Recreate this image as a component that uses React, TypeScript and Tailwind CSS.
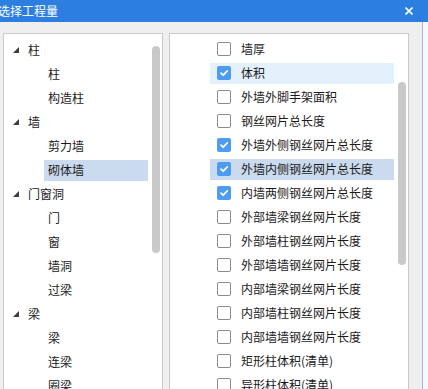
import React from 'react';

type TreeNode = { label: string; level: 1 | 2; selected?: boolean };

const treeNodes: TreeNode[] = [
  { label: '柱', level: 1 },
  { label: '柱', level: 2 },
  { label: '构造柱', level: 2 },
  { label: '墙', level: 1 },
  { label: '剪力墙', level: 2 },
  { label: '砌体墙', level: 2, selected: true },
  { label: '门窗洞', level: 1 },
  { label: '门', level: 2 },
  { label: '窗', level: 2 },
  { label: '墙洞', level: 2 },
  { label: '过梁', level: 2 },
  { label: '梁', level: 1 },
  { label: '梁', level: 2 },
  { label: '连梁', level: 2 },
  { label: '圈梁', level: 2 },
];

type Item = { label: string; checked?: boolean; state?: 'hover' | 'selected' };

const items: Item[] = [
  { label: '墙厚' },
  { label: '体积', checked: true, state: 'hover' },
  { label: '外墙外脚手架面积' },
  { label: '钢丝网片总长度' },
  { label: '外墙外侧钢丝网片总长度', checked: true },
  { label: '外墙内侧钢丝网片总长度', checked: true, state: 'selected' },
  { label: '内墙两侧钢丝网片总长度', checked: true },
  { label: '外部墙梁钢丝网片长度' },
  { label: '外部墙柱钢丝网片长度' },
  { label: '外部墙墙钢丝网片长度' },
  { label: '内部墙梁钢丝网片长度' },
  { label: '内部墙柱钢丝网片长度' },
  { label: '内部墙墙钢丝网片长度' },
  { label: '矩形柱体积(清单)' },
  { label: '异形柱体积(清单)' },
];

const Expander = () => (
  <svg width="6" height="6" viewBox="0 0 6 6" className="shrink-0">
    <path d="M6 0 L6 6 L0 6 Z" fill="#3c3c3c" />
  </svg>
);

const CheckBox: React.FC<{ checked?: boolean }> = ({ checked }) =>
  checked ? (
    <span className="flex h-[14px] w-[14px] shrink-0 items-center justify-center rounded-[2px] bg-[#4e9cf2]">
      <svg width="10" height="10" viewBox="0 0 10 10">
        <path d="M2 5.2 L4.2 7.2 L8.2 3" fill="none" stroke="#ffffff" strokeWidth="1.8" strokeLinecap="round" strokeLinejoin="round" />
      </svg>
    </span>
  ) : (
    <span className="h-[14px] w-[14px] shrink-0 rounded-[2px] border border-[#8a8a8a] bg-white" />
  );

export default function App() {
  return (
    <div
      className="relative h-[389px] w-[428px] overflow-hidden bg-[#f7f8fa] text-[12px] text-[#1a1a1a]"
      style={{ fontFamily: '"Noto Sans CJK SC", "Noto Sans", sans-serif' }}
    >
      {/* title bar */}
      <div className="flex h-[22px] items-center justify-between bg-[#2c7fe0] pr-[15px] text-white">
        <span className="-ml-[2px] text-[12px] leading-none">选择工程量</span>
        <svg width="8" height="8" viewBox="0 0 8 8">
          <path d="M0.5 0.5 L7.5 7.5 M7.5 0.5 L0.5 7.5" stroke="#ffffff" strokeWidth="1.6" />
        </svg>
      </div>

      <div className="flex h-[367px] w-[423px] gap-[6px] border-r border-[#a7b8cd] bg-[#efefef] pl-[3px] pt-[11px]">
        {/* tree panel */}
        <div className="flex h-[400px] w-[160px] border border-[#c9c9c9] bg-white">
          <div className="w-[148px] pt-[4px]">
            {treeNodes.map((n, i) => (
              <div key={i} className="flex h-[24px] items-center">
                {n.level === 1 ? (
                  <div className="flex items-center pl-[9px]">
                    <Expander />
                    <span className="ml-[9px]">{n.label}</span>
                  </div>
                ) : (
                  <div
                    className={`ml-[40px] flex h-[21px] w-[104px] items-center pl-[4px] ${n.selected ? 'bg-[#cbdbef]' : ''}`}
                  >
                    {n.label}
                  </div>
                )}
              </div>
            ))}
          </div>
          <div className="w-[8px]">
            <div className="mt-[12px] h-[207px] w-[8px] rounded-full bg-[#c9c9c9]" />
          </div>
        </div>

        {/* quantity panel */}
        <div className="flex h-[400px] w-[240px] border border-[#c9c9c9] bg-white">
          <div className="w-[228px] pt-[3px]">
            {items.map((it, i) => (
              <div key={i} className="flex h-[24px] items-center">
                <div
                  className={`ml-[40px] flex h-[21px] w-[184px] items-center gap-[10px] pl-[7px] ${
                    it.state === 'hover' ? 'bg-[#e4f0fc]' : it.state === 'selected' ? 'bg-[#cbdbef]' : ''
                  }`}
                >
                  <CheckBox checked={it.checked} />
                  <span className="whitespace-nowrap">{it.label}</span>
                </div>
              </div>
            ))}
          </div>
          <div className="w-[8px]">
            <div className="mt-[48px] h-[183px] w-[8px] rounded-full bg-[#c9c9c9]" />
          </div>
        </div>
      </div>
    </div>
  );
}
